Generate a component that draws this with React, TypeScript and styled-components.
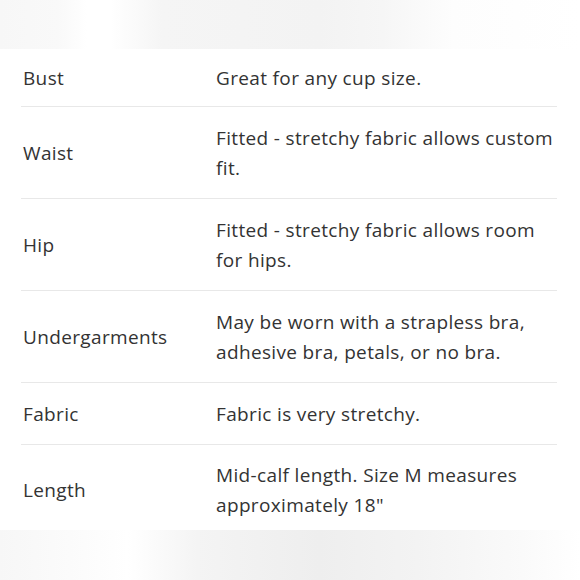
import styled, { createGlobalStyle } from 'styled-components';

const GlobalStyle = createGlobalStyle`
    html, body {
        margin: 0;
        padding: 0;
        background: #ffffff;
    }
    #root {
        width: 580px;
        height: 580px;
        overflow: hidden;
    }
`;

const Page = styled.div`
    display: flex;
    flex-direction: column;
    width: 580px;
    height: 580px;
    background: #ffffff;
    font-family: 'Open Sans', Lato, sans-serif;
    color: #333333;
`;

const Band = styled.div<{ h: number; bottom?: boolean }>`
    height: ${({ h }) => h}px;
    flex-shrink: 0;
    background: ${({ bottom }) =>
        bottom
            ? 'linear-gradient(90deg, #f7f7f7 0%, #fbfbfb 12%, #ffffff 22%, #f4f4f4 34%, #eeeeee 55%, #f3f3f3 72%, #fafafa 90%, #ffffff 100%)'
            : 'linear-gradient(90deg, #f7f7f7 0%, #f9f9f9 10%, #ffffff 15%, #ffffff 19%, #f5f5f5 28%, #f3f3f3 55%, #f6f6f6 66%, #fdfdfd 78%, #ffffff 100%)'};
`;

const Table = styled.div`
    display: flex;
    flex-direction: column;
    padding: 0 23px 0 21px;
    background: #ffffff;
`;

const Row = styled.div<{ padTop: number; padBottom: number; last?: boolean }>`
    display: grid;
    grid-template-columns: 193px 1fr;
    align-items: center;
    padding: ${({ padTop, padBottom }) => `${padTop}px 0 ${padBottom}px 2px`};
    border-bottom: ${({ last }) => (last ? 'none' : '1px solid #e8e8e8')};
`;

const Label = styled.div`
    font-size: 19px;
    line-height: 30px;
    letter-spacing: 0.35px;
`;

const Value = styled.div`
    font-size: 19px;
    line-height: 30px;
    letter-spacing: 0.35px;
`;

const rows = [
    { label: 'Bust', value: 'Great for any cup size.', top: 14, bottom: 13 },
    { label: 'Waist', value: 'Fitted - stretchy fabric allows custom fit.', top: 16, bottom: 15 },
    { label: 'Hip', value: 'Fitted - stretchy fabric allows room for hips.', top: 16, bottom: 15 },
    { label: 'Undergarments', value: 'May be worn with a strapless bra, adhesive bra, petals, or no bra.', top: 16, bottom: 15 },
    { label: 'Fabric', value: 'Fabric is very stretchy.', top: 16, bottom: 15 },
    { label: 'Length', value: 'Mid-calf length. Size M measures approximately 18"', top: 15, bottom: 10 },
];

const App = () => {
    return (
        <Page>
            <GlobalStyle />
            <Band h={49} />
            <Table>
                {rows.map((r, i) => (
                    <Row key={r.label} padTop={r.top} padBottom={r.bottom} last={i === rows.length - 1}>
                        <Label>{r.label}</Label>
                        <Value>{r.value}</Value>
                    </Row>
                ))}
            </Table>
            <Band h={60} bottom />
        </Page>
    );
};

export default App;
